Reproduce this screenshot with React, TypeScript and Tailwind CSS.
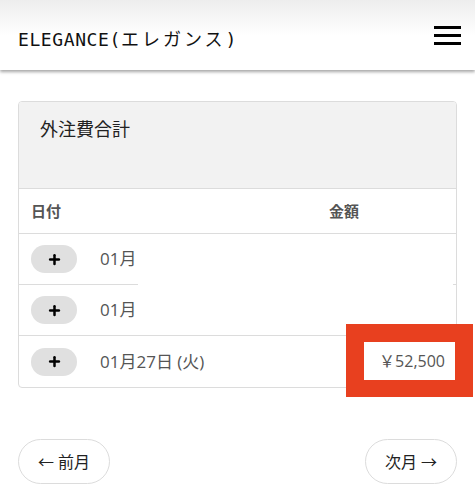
import { Plus } from 'lucide-react'

const rows = [
  { date: '01月', amount: '' },
  { date: '01月', amount: '' },
  { date: '01月27日 (火)', amount: '￥52,500' },
]

function Hamburger() {
  return (
    <button className="flex flex-col gap-[5px] w-[27px]" aria-label="menu">
      <span className="block h-[3px] w-full bg-black" />
      <span className="block h-[3px] w-full bg-black" />
      <span className="block h-[3px] w-full bg-black" />
    </button>
  )
}

export default function App() {
  return (
    <div
      className="relative w-[475px] h-[500px] overflow-hidden bg-white text-[#333]"
      style={{ fontFamily: '"Open Sans", "Noto Sans CJK JP", sans-serif' }}
    >
      <header className="h-[70px] flex items-center justify-between pl-[18px] pr-[14px] bg-gradient-to-b from-[#ededed] via-white to-white shadow-[0_2px_3px_rgba(0,0,0,0.35)]">
        <h1
          className="text-[18px] text-[#111] pt-[10px] leading-none"
          style={{ fontFamily: '"DejaVu Sans Mono", "Noto Sans CJK JP", monospace' }}
        >
          <span className="tracking-[0.6px]">ELEGANCE(</span>
          <span className="tracking-[3px]">エレガンス</span>
          <span>)</span>
        </h1>
        <div className="pt-[1px]">
          <Hamburger />
        </div>
      </header>

      <main className="px-[18px] pt-[31px]">
        <div className="border border-[#dcdcdc] rounded-[4px] overflow-hidden">
          <div className="h-[87px] bg-[#f2f2f2] border-b border-[#dcdcdc] px-[21px] pt-[14px] text-[18px] text-[#222]">
            外注費合計
          </div>
          <div className="h-[45px] flex items-center border-b border-[#dcdcdc] text-[15px] font-bold text-[#555]">
            <div className="pl-[12px] w-[310px]">日付</div>
            <div>金額</div>
          </div>
          {rows.map((r, i) => (
            <div
              key={i}
              className={`h-[51px] flex items-center pl-[12px] ${i < rows.length - 1 ? 'border-b border-[#dcdcdc]' : ''}`}
            >
              <span className="w-[46px] h-[28px] rounded-full bg-[#e0e0e0] flex items-center justify-center">
                <Plus size={15} strokeWidth={4} className="text-black" />
              </span>
              <span className="ml-[23px] text-[17px] text-[#555]">{r.date}</span>
            </div>
          ))}
        </div>

        <div className="flex justify-between mt-[51px]">
          <button className="h-[45px] w-[92px] rounded-full border border-[#dcdcdc] text-[16px] text-[#222]">
            ← 前月
          </button>
          <button className="h-[45px] w-[92px] rounded-full border border-[#dcdcdc] text-[16px] text-[#222]">
            次月 →
          </button>
        </div>
      </main>

      {/* privacy patch over first two rows */}
      <div className="absolute left-[138px] top-[236px] w-[315px] h-[98px] bg-white" />

      {/* red annotation around amount */}
      <div className="absolute left-[346px] top-[324px] w-[127px] h-[73px] bg-[#e8401f] flex items-center justify-center">
        <div className="w-[91px] h-[38px] bg-white flex items-center justify-end pr-[10px] text-[16px] text-[#555]">
          ￥52,500
        </div>
      </div>
    </div>
  )
}
